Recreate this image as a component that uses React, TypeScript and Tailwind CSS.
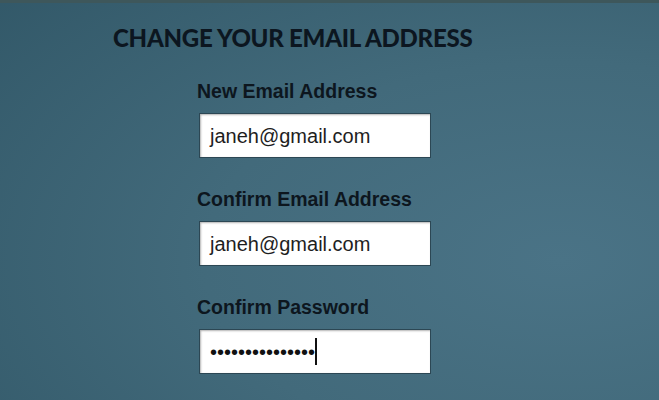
const FIELD_LABEL =
  "text-[19.5px] leading-[20px] font-bold text-[#0d161e] font-['Liberation_Sans',Arial,sans-serif]";
const INPUT_BOX =
  "flex items-center w-[232px] h-[45px] bg-white border border-[#2c4754] shadow-[inset_1px_1px_2px_rgba(0,0,0,0.3)] pl-[10px] text-[20px] text-[#1e1e1e] font-['Liberation_Sans',Arial,sans-serif]";

type Field = {
  label: string;
  value: string;
  password?: boolean;
};

const FIELDS: Field[] = [
  { label: 'New Email Address', value: 'janeh@gmail.com' },
  { label: 'Confirm Email Address', value: 'janeh@gmail.com' },
  { label: 'Confirm Password', value: '•'.repeat(15), password: true }
];

export default function App() {
  return (
    <div className="w-[659px] h-[400px] overflow-hidden flex flex-col bg-[radial-gradient(ellipse_120%_110%_at_85%_65%,#4a7386_0%,#426a7b_45%,#305666_100%)]">
      <div className="h-[3px] bg-[#3e575b]" />
      <div className="flex flex-col pl-[113px] pt-[23px]">
        <h1 className="text-[24px] leading-[24px] font-black tracking-[-0.25px] text-[#0c1620] font-['Lato',sans-serif]">
          CHANGE YOUR EMAIL ADDRESS
        </h1>

        <form className="flex flex-col ml-[84px] mt-[31px] gap-[31px]">
          {FIELDS.map((field) => (
            <div key={field.label} className="flex flex-col gap-[12px]">
              <span className={FIELD_LABEL}>{field.label}</span>
              <div className={`${INPUT_BOX} ml-[2px]`}>
                {field.password ? (
                  <>
                    <span className="text-[#111]">{field.value}</span>
                    <span className="w-[2px] h-[27px] bg-[#111]" />
                  </>
                ) : (
                  <span>{field.value}</span>
                )}
              </div>
            </div>
          ))}
        </form>
      </div>
    </div>
  );
}
